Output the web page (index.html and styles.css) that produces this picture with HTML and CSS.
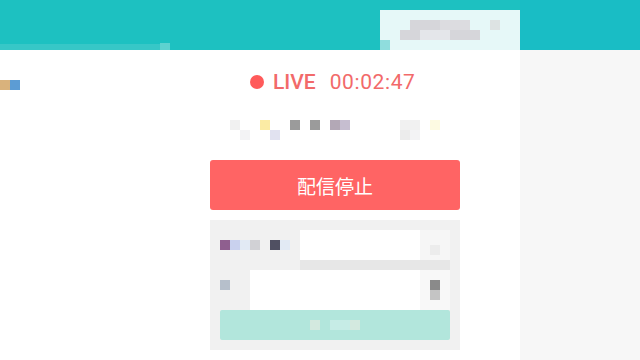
FILE: index.html
```html
<!DOCTYPE html>
<html>

<head>
    <title>配信中</title>
    <link rel="stylesheet" href="styles.css">
</head>

<body>
    <div class="header">
        <div class="nav">
            <div class="nav-tab"><span class="tab-line"></span><span class="tab-end"></span></div>
        </div>
        <div class="account">
            <div class="blur-row"><span class="bx w30 g1"></span><span class="bx w30 g2"></span><span class="bx w20"></span><span class="bx g3"></span></div>
            <div class="blur-row"><span class="bx w20 g1 off"></span><span class="bx w30 g4"></span><span class="bx w30 g1"></span></div>
            <div class="blur-row last"><span class="bx teal"></span></div>
        </div>
        <div class="header-fill"></div>
    </div>

    <div class="main">
        <div class="content">
            <div class="left">
                <span class="bx tan"></span><span class="bx blue"></span>
            </div>

            <div class="center">
                <div class="live">
                    <span class="dot"></span>
                    <span class="live-label">LIVE</span>
                    <span class="live-time">00:02:47</span>
                </div>

                <div class="mosaic">
                    <div class="blur-row">
                        <span class="bx f1"></span><span class="bx w20"></span><span class="bx yel"></span><span class="bx w20"></span><span class="bx grey"></span><span class="bx"></span><span class="bx grey"></span><span class="bx"></span><span class="bx mauve"></span><span class="bx lilac"></span><span class="bx w50"></span><span class="bx w20 f1"></span><span class="bx"></span><span class="bx cream"></span>
                    </div>
                    <div class="blur-row">
                        <span class="bx"></span><span class="bx f2"></span><span class="bx w20"></span><span class="bx pale"></span><span class="bx w120"></span><span class="bx f3"></span><span class="bx f2"></span>
                    </div>
                </div>

                <button class="stop-button">配信停止</button>

                <div class="panel">
                    <div class="panel-row">
                        <div class="label-blur">
                            <span class="bx purple"></span><span class="bx peri"></span><span class="bx ice"></span><span class="bx silver"></span><span class="bx f1"></span><span class="bx ink"></span><span class="bx ice"></span>
                        </div>
                        <div class="field short"></div>
                        <div class="addon"><span class="bx f3"></span></div>
                    </div>
                    <div class="hint"></div>
                    <div class="panel-row tall">
                        <div class="label-blur narrow"><span class="bx slate"></span></div>
                        <div class="field long"></div>
                        <div class="addon stack"><span class="bx dark"></span><span class="bx mid"></span></div>
                    </div>
                    <button class="submit-button">
                        <span class="bx mint1"></span><span class="bx"></span><span class="bx w20 mint2"></span><span class="bx mint1"></span>
                    </button>
                </div>
            </div>
        </div>
        <div class="side"></div>
    </div>
</body>

</html>
```

FILE: styles.css
```css
body {
    margin: 0;
    width: 640px;
    height: 360px;
    overflow: hidden;
    font-family: Roboto, "Noto Sans CJK JP", sans-serif;
    background-color: #fff;
}

/* mosaic blocks */
.bx {
    display: inline-block;
    width: 10px;
    height: 10px;
    flex: none;
}

.w20 { width: 20px; }
.w30 { width: 30px; }
.w50 { width: 50px; }
.w120 { width: 120px; }

.blur-row {
    display: flex;
    height: 10px;
}

.g1 { background-color: #d6d6da; }
.g2 { background-color: #dcdce0; }
.g3 { background-color: #dde3e3; }
.g4 { background-color: #e4e6ea; }
.teal { background-color: #8fdddd; }
.tan { background-color: #d9b27c; }
.blue { background-color: #5c9cd4; }
.f1 { background-color: #f1f1f1; }
.f2 { background-color: #f3f3f5; }
.f3 { background-color: #ececec; }
.yel { background-color: #fbeba4; }
.grey { background-color: #9b9b9b; }
.mauve { background-color: #b3a8b6; }
.lilac { background-color: #c6bed0; }
.cream { background-color: #fdfae2; }
.pale { background-color: #e1e2f0; }
.purple { background-color: #8f5f8f; }
.peri { background-color: #c9d1ee; }
.ice { background-color: #e2eaf4; }
.silver { background-color: #d1d1d5; }
.ink { background-color: #505062; }
.slate { background-color: #b6bfcb; }
.dark { background-color: #8a8a8a; }
.mid { background-color: #c4c4c4; }
.mint1 { background-color: #d3e9df; }
.mint2 { background-color: #c6ece6; }

/* header */
.header {
    display: flex;
    height: 50px;
    background-color: #1dc1c1;
}

.nav {
    width: 380px;
    display: flex;
    align-items: flex-end;
}

.nav-tab {
    display: flex;
    align-items: flex-end;
    height: 7px;
}

.tab-line {
    width: 160px;
    height: 6px;
    background-color: #37c7c7;
}

.tab-end {
    width: 10px;
    height: 7px;
    background-color: #5dd2d0;
}

.account {
    width: 140px;
    margin-top: 10px;
    padding-top: 10px;
    box-sizing: border-box;
    background-color: #e6f8f8;
}

.account .blur-row {
    padding-left: 30px;
}

.account .blur-row .off {
    margin-left: -10px;
}

.account .blur-row.last {
    padding-left: 0;
}

.header-fill {
    flex: 1;
    background-color: #19bdc5;
}

/* main area */
.main {
    display: flex;
    height: 310px;
}

.content {
    width: 520px;
    display: flex;
}

.side {
    flex: 1;
    background-color: #f7f7f7;
}

.left {
    width: 210px;
    display: flex;
    padding-top: 30px;
    align-items: flex-start;
}

.center {
    width: 250px;
}

.live {
    display: flex;
    align-items: center;
    height: 20px;
    margin-top: 22px;
    padding-left: 40px;
    color: #f26a6a;
    font-size: 21px;
}

.dot {
    width: 14px;
    height: 14px;
    border-radius: 50%;
    background-color: #ff5a5a;
    margin-right: 9px;
}

.live-label {
    font-weight: 500;
    margin-right: 14px;
}

.live-time {
    letter-spacing: 0.6px;
}

.mosaic {
    margin-top: 28px;
    padding-left: 20px;
}

.stop-button {
    display: block;
    width: 250px;
    height: 50px;
    margin-top: 20px;
    border: none;
    border-radius: 3px;
    background-color: #ff6464;
    color: #fff;
    font-family: "Noto Sans CJK JP", sans-serif;
    font-size: 19px;
    padding: 0;
}

.panel {
    margin-top: 10px;
    height: 130px;
    box-sizing: border-box;
    padding: 10px;
    background-color: #f1f1f1;
}

.panel-row {
    display: flex;
    height: 30px;
}

.panel-row.tall {
    height: 40px;
}

.label-blur {
    width: 80px;
    display: flex;
    padding-top: 10px;
}

.label-blur.narrow {
    width: 30px;
}

.field {
    background-color: #fff;
}

.field.short {
    width: 120px;
}

.field.long {
    width: 170px;
}

.addon {
    width: 30px;
    padding: 10px 0 0 10px;
    box-sizing: border-box;
    background-color: #f6f6f6;
}

.addon.stack {
    display: flex;
    flex-direction: column;
    background-color: #f8f8f8;
}

.hint {
    height: 10px;
    margin-left: 80px;
    background-color: #e7e7e7;
}

.submit-button {
    display: flex;
    align-items: flex-start;
    width: 230px;
    height: 30px;
    padding: 10px 0 0 90px;
    border: none;
    border-radius: 2px;
    background-color: #b2e6dc;
}
```
